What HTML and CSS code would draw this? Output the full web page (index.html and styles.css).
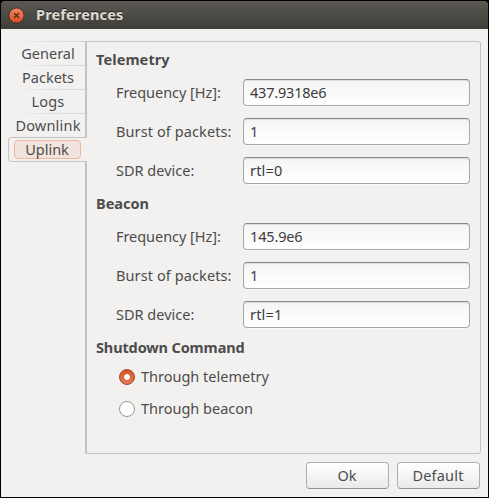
FILE: index.html
```
<!DOCTYPE html>
<html lang="en">
<head>
<meta charset="utf-8">
<title>Preferences</title>
<link rel="stylesheet" href="styles.css">
</head>
<body>
<div class="window">
  <header class="titlebar">
    <svg class="close" viewBox="0 0 17 17" width="17" height="17">
      <defs><linearGradient id="orange" x1="0" y1="0" x2="0" y2="1"><stop offset="0" stop-color="#f58563"/><stop offset="1" stop-color="#df4b1c"/></linearGradient></defs>
      <circle cx="8.5" cy="8.5" r="7.6" fill="url(#orange)" stroke="#34322d"/>
      <path d="M6 6l5 5M11 6l-5 5" stroke="#4a2e22" stroke-width="1.3"/>
    </svg>
    <h1><span class="t t-title">Preferences</span></h1>
  </header>
  <main class="body">
    <nav class="tabs">
      <div class="tab"><span class="t t-general">General</span></div>
      <div class="tab"><span class="t t-packets">Packets</span></div>
      <div class="tab"><span class="t t-logs">Logs</span></div>
      <div class="tab"><span class="t t-downlink">Downlink</span></div>
      <div class="tab selected"><div class="focus"><span class="t t-uplink">Uplink</span></div></div>
    </nav>
    <section class="panel">
      <h2><span class="t t-telemetry">Telemetry</span></h2>
      <div class="fields">
        <div class="field"><span class="label"><span class="t t-freq">Frequency [Hz]:</span></span><div class="entry"><span class="t t-v1">437.9318e6</span></div></div>
        <div class="field"><span class="label"><span class="t t-burst">Burst of packets:</span></span><div class="entry"><span class="t">1</span></div></div>
        <div class="field"><span class="label"><span class="t t-sdr">SDR device:</span></span><div class="entry"><span class="t t-rtl">rtl=0</span></div></div>
      </div>
      <h2><span class="t t-beacon">Beacon</span></h2>
      <div class="fields">
        <div class="field"><span class="label"><span class="t t-freq">Frequency [Hz]:</span></span><div class="entry"><span class="t t-v2">145.9e6</span></div></div>
        <div class="field"><span class="label"><span class="t t-burst">Burst of packets:</span></span><div class="entry"><span class="t">1</span></div></div>
        <div class="field"><span class="label"><span class="t t-sdr">SDR device:</span></span><div class="entry"><span class="t t-rtl">rtl=1</span></div></div>
      </div>
      <h2><span class="t t-shutdown">Shutdown Command</span></h2>
      <div class="radios">
        <div class="radio"><i class="dot on"></i><span class="t t-rt">Through telemetry</span></div>
        <div class="radio"><i class="dot"></i><span class="t t-rb">Through beacon</span></div>
      </div>
    </section>
  </main>
  <footer class="actions">
    <div class="button"><span class="t t-ok">Ok</span></div>
    <div class="button"><span class="t t-default">Default</span></div>
  </footer>
</div>
</body>
</html>
```
FILE: styles.css
```
* { box-sizing: border-box; }
body { margin: 0; font: 14.5px/20px "Noto Sans", "Open Sans", sans-serif; color: #4c4c4c; }
.window { width: 489px; height: 498px; border: 1px solid #000; background: #f2f1f0; display: flex; flex-direction: column; }
.titlebar { height: 28px; flex: none; display: flex; align-items: center; gap: 11px; padding-left: 7px; background: radial-gradient(circle at 4px 4px, transparent 4px, #000 4.5px) 0 0 / 4px 4px no-repeat, radial-gradient(circle at 0 4px, transparent 4px, #000 4.5px) 100% 0 / 4px 4px no-repeat, linear-gradient(#5b5952, #3e3d38); }
h1, h2 { margin: 0; font-size: 14.5px; height: 20px; line-height: 18px; font-weight: 700; }
h1 { color: #dfdbd2; text-shadow: 0 -1px 0 #22211e; }
.t { display: block; white-space: pre; line-height: 18px; padding-bottom: 2px; }
.t-title { letter-spacing: 0.15px; }
.t-telemetry { letter-spacing: 0.1px; }
.t-shutdown { letter-spacing: -0.13px; }
.t-freq { letter-spacing: -0.05px; }
.t-burst { letter-spacing: 0.1px; }
.t-v1 { letter-spacing: -0.2px; }
.t-v2 { letter-spacing: -0.15px; }
.t-rtl { letter-spacing: 0.2px; }
.t-downlink { letter-spacing: 0.2px; }
.t-logs { letter-spacing: 0.15px; }
.t-ok { margin-left: -1px; }
.t-default { letter-spacing: 0.2px; margin-left: -1px; }
.body { display: flex; padding: 12px 7px 0; }
.tabs { width: 77px; flex: none; }
.tab { height: 24px; display: flex; align-items: center; justify-content: center; padding-top: 1px; padding-left: 3px; background: linear-gradient(90deg, transparent, #d4d3d1) top / 100% 1px no-repeat; }
.tab.selected { height: 25px; width: 79px; margin-right: -2px; padding: 0 6px 0 5px; justify-content: flex-start; position: relative; background: #f2f1f0; border: 1px solid #c4c3c1; border-right: 0; border-radius: 4px 0 0 4px; }
.focus { width: 67px; height: 19px; border: 1px solid #f2b39d; border-radius: 4px; background: #f2e3dd; display: flex; align-items: center; justify-content: center; padding-right: 1px; }
.panel { flex: 1; height: 413px; border: 1px solid #c4c3c1; border-left: 2px solid #c4c3c1; border-radius: 1px 3px 3px 1px; padding: 8px 10px 0 9px; }
.fields { display: grid; gap: 12px; padding: 9px 0 10px 20px; }
.field { display: grid; grid-template-columns: 127px 227px; }
.label { display: flex; align-items: center; }
.entry { height: 27px; border: 1px solid #a9a8a6; border-top-color: #888786; border-radius: 4px; background: linear-gradient(#f5f5f5, #fff); box-shadow: inset 0 1px 1px #dedddd, 0 1px 0 #faf9f9; color: #3c3c3c; display: flex; align-items: center; padding-left: 6px; }
.radios { display: grid; gap: 12px; padding: 9px 0 0 23px; }
.radio { display: flex; align-items: center; gap: 6px; height: 20px; }
.dot { width: 16px; height: 16px; border: 1px solid #999896; border-radius: 50%; background: #fff; }
.dot.on { border-color: #a6482a; background: radial-gradient(circle, #fff 2.4px, transparent 3.4px), linear-gradient(#d4552b, #e47d56); }
.actions { display: flex; justify-content: flex-end; gap: 8px; padding: 8px 8px 0; }
.button { width: 83px; height: 27px; border: 1px solid #b0afad; border-bottom-color: #929190; border-radius: 4px; background: linear-gradient(#fff, #ebeae9); display: flex; align-items: center; justify-content: center; }
```
